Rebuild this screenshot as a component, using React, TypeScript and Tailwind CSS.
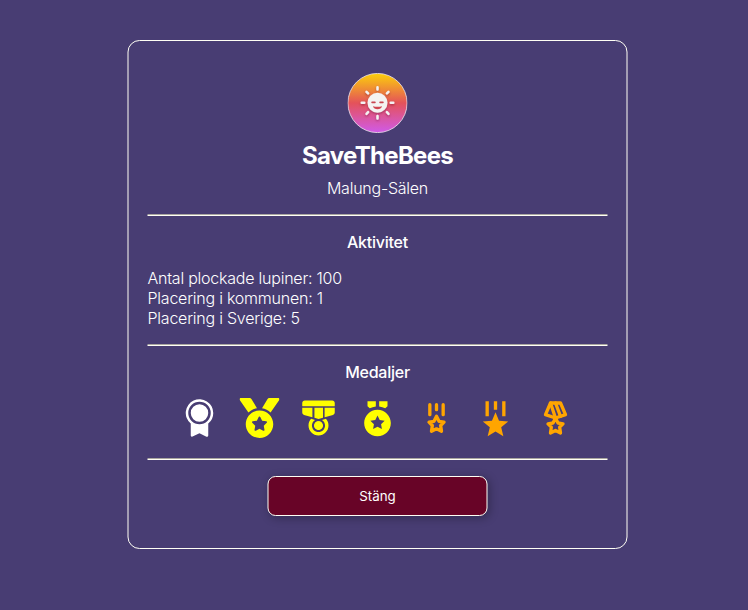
import { FaMedal } from 'react-icons/fa';
import { PiMedalFill } from 'react-icons/pi';
import { IoIosMedal } from 'react-icons/io';
import { RiMedalFill, RiMedal2Fill } from 'react-icons/ri';
import { TbMedal, TbMedal2 } from 'react-icons/tb';

const medals = [
  { Icon: PiMedalFill, style: 'mr-px text-white' },
  { Icon: FaMedal, style: 'text-[#ffff00]' },
  { Icon: IoIosMedal, style: 'text-[#ffff00]' },
  { Icon: RiMedalFill, style: 'text-[#ffff00]' },
  { Icon: TbMedal, style: 'text-[#ffa500]' },
  { Icon: RiMedal2Fill, style: 'mr-px text-[#ffa500]' },
  { Icon: TbMedal2, style: 'text-[#ffa500]' },
];

function SunAvatar() {
  return (
    <svg className="block size-[60px]" viewBox="0 0 60 60">
      <defs>
        <linearGradient id="sky" x1="0" y1="0" x2="0" y2="1">
          <stop offset="0" stopColor="#fcd00a" />
          <stop offset="0.5" stopColor="#e4525a" />
          <stop offset="1" stopColor="#d05ae8" />
        </linearGradient>
        <filter id="glow" x="-20%" y="-20%" width="140%" height="150%">
          <feDropShadow dx="0" dy="1.2" stdDeviation="0.9" floodColor="#5a1030" floodOpacity="0.45" />
        </filter>
      </defs>
      <circle cx="30" cy="30" r="29.6" fill="url(#sky)" stroke="#f3e6ee" strokeWidth="0.8" />
      <g filter="url(#glow)">
        <circle cx="30" cy="29.8" r="10" fill="#f4f2f2" />
        <g stroke="#f4f2f2" strokeWidth="2.5" strokeLinecap="round">
          <path d="M30 14.2v2.4M30 43v2.4M14.2 29.8h2.6M43.2 29.8h2.6M19 18.8l1.6 1.6M39.4 39.2l1.6 1.6M19 40.8l1.6-1.6M39.4 20.4l1.6-1.6" />
        </g>
      </g>
      <path d="M24.6 29.3h2.8M32.6 29.3h2.8" fill="none" stroke="#c94450" strokeWidth="1.7" strokeLinecap="round" />
      <path d="M25.3 33.2q4.7 1.2 9.4 0q-1.2 3-4.7 3t-4.7-3z" fill="#cf4550" />
    </svg>
  );
}

function Divider() {
  return <hr className="w-full border-t border-b border-t-[#a9a6a0] border-b-[#fffff5]" />;
}

export default function App() {
  return (
    <div className="flex h-[610px] w-[755px] justify-center bg-[#483d73] pt-[40px] font-['Inter',sans-serif] text-white">
      <main className="flex h-[509px] w-[500px] -translate-x-[0.5px] flex-col items-center rounded-[12px] border border-[#fffff5] px-[19px] pt-8">
        <SunAvatar />
        <h1 className="mt-[7px] pl-px text-2xl leading-8 font-bold tracking-[-0.7px]">SaveTheBees</h1>
        <p className="mt-[6px] mb-[16px] pl-px text-base leading-5 font-light tracking-[-0.24px]">Malung-Sälen</p>
        <Divider />
        <h2 className="mt-4 pl-px text-base leading-5 font-medium tracking-[-0.24px]">Aktivitet</h2>
        <div className="mt-4 mb-4 w-full pl-[0.5px] text-base leading-5 font-light tracking-[-0.23px]">
          <p>Antal plockade lupiner: 100</p>
          <p>Placering i kommunen: 1</p>
          <p>Placering i Sverige: 5</p>
        </div>
        <Divider />
        <h2 className="mt-4 pl-px text-base leading-5 font-medium tracking-[-0.24px]">Medaljer</h2>
        <div className="mt-4 mb-5 flex gap-[19px]">
          {medals.map(({ Icon, style }, i) => (
            <Icon key={i} size={40} className={style} />
          ))}
        </div>
        <Divider />
        <button className="mt-4 h-10 w-[220px] rounded-[8px] border border-[#fffff5] bg-[#680427] pt-px pl-px text-[13.333px] shadow-[2px_2px_10px_rgba(0,0,0,0.3)]">
          Stäng
        </button>
      </main>
    </div>
  );
}
